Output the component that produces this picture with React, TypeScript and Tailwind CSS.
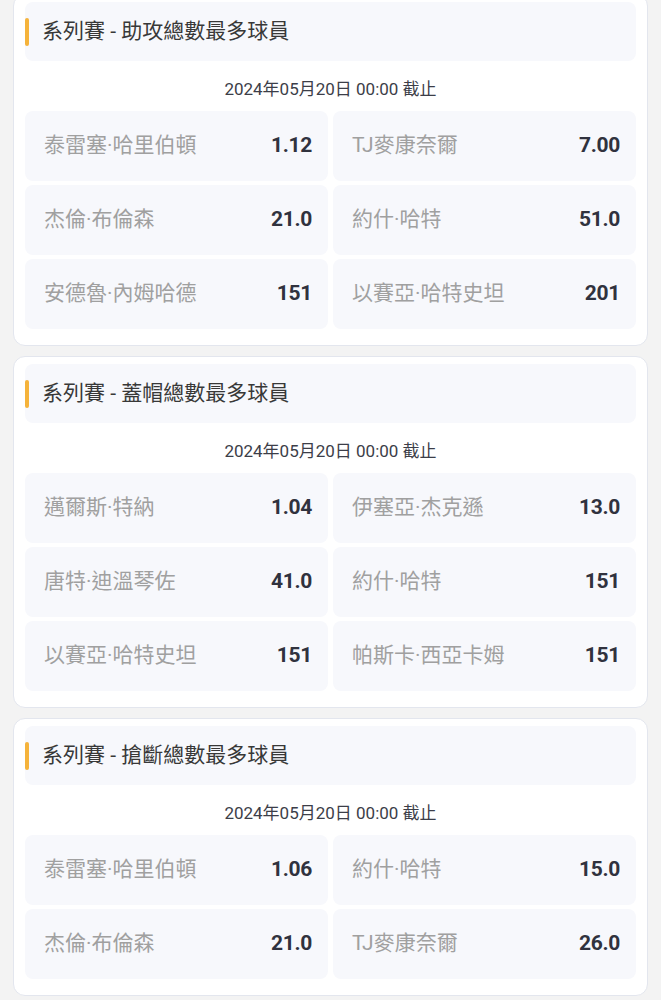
const sections = [
  {
    title: "系列賽 - 助攻總數最多球員",
    rows: [
      ["泰雷塞·哈里伯頓", "1.12", "TJ麥康奈爾", "7.00"],
      ["杰倫·布倫森", "21.0", "約什·哈特", "51.0"],
      ["安德魯·內姆哈德", "151", "以賽亞·哈特史坦", "201"],
    ],
  },
  {
    title: "系列賽 - 蓋帽總數最多球員",
    rows: [
      ["邁爾斯·特納", "1.04", "伊塞亞·杰克遜", "13.0"],
      ["唐特·迪溫琴佐", "41.0", "約什·哈特", "151"],
      ["以賽亞·哈特史坦", "151", "帕斯卡·西亞卡姆", "151"],
    ],
  },
  {
    title: "系列賽 - 搶斷總數最多球員",
    rows: [
      ["泰雷塞·哈里伯頓", "1.06", "約什·哈特", "15.0"],
      ["杰倫·布倫森", "21.0", "TJ麥康奈爾", "26.0"],
    ],
  },
];

const Cell = ({ name, odds }: { name: string; odds: string }) => (
  <div className="h-[70px] rounded-lg bg-[#f7f8fc] flex items-center justify-between pl-[19px] pr-[16px]">
    <span className="text-[21px] text-[#a0a0a0] font-['Roboto','Noto_Sans_CJK_TC',sans-serif]">
      {name}
    </span>
    <span className="text-[21px] font-bold text-[#30323e] font-['Roboto',sans-serif] tracking-[-0.3px]">
      {odds}
    </span>
  </div>
);

export default function App() {
  return (
    <div className="min-h-screen bg-[#f3f3f3] overflow-hidden">
      <div className="flex flex-col gap-[10px] mx-[13px] -mt-[6px] pb-4">
        {sections.map((s) => (
          <div
            key={s.title}
            className="bg-white rounded-xl border border-[#e3e6ee] px-[11px] pt-[7px] pb-[16px]"
          >
            <div className="h-[59px] rounded-lg bg-[#f7f8fc] flex items-center gap-[13px]">
              <div className="w-1 h-7 rounded-full bg-[#f5b33b]" />
              <span className="text-[21px] text-[#383838] font-['Roboto','Noto_Sans_CJK_TC',sans-serif]">
                {s.title}
              </span>
            </div>
            <div className="mt-[19px] mb-[11px] h-5 flex items-center justify-center text-[17px] text-[#3c3e48] font-['Roboto','Noto_Sans_CJK_TC',sans-serif]">
              2024年05月20日 00:00 截止
            </div>
            <div className="grid grid-cols-2 gap-x-[5px] gap-y-1">
              {s.rows.map((r, i) => (
                <div key={i} className="contents">
                  <Cell name={r[0]} odds={r[1]} />
                  <Cell name={r[2]} odds={r[3]} />
                </div>
              ))}
            </div>
          </div>
        ))}
      </div>
    </div>
  );
}
